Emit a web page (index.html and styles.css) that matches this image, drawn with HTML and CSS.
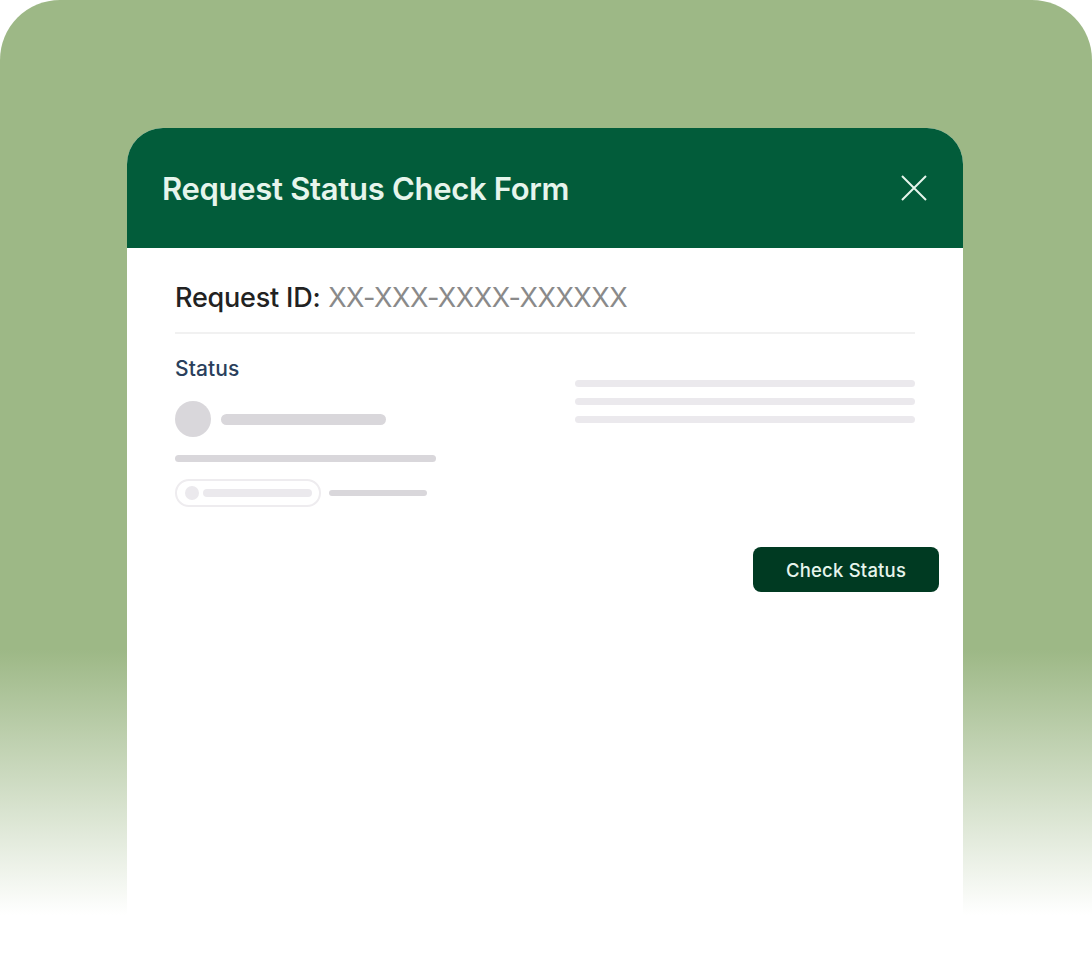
FILE: index.html
```html
<!DOCTYPE html>
<html>
<head>
<meta charset="utf-8">
<link rel="stylesheet" href="styles.css">
</head>
<body>
<div class="stage">
  <div class="card">
    <div class="card-head">
      <h1 class="title">Request Status Check Form</h1>
      <svg class="close" width="26" height="26" viewBox="0 0 26 26"><path d="M1 1L25 25M25 1L1 25" stroke="#e6f5ec" stroke-width="2" fill="none"/></svg>
    </div>
    <div class="card-body">
      <div class="req"><span class="req-label">Request ID:</span> <span class="req-val">XX-XXX-XXXX-XXXXXX</span></div>
      <div class="divider"></div>
      <div class="status-grid">
        <div class="status-left">
          <div class="status-label">Status</div>
          <div class="avatar-row">
            <div class="avatar"></div>
            <div class="bar bar-name"></div>
          </div>
          <div class="bar bar-long"></div>
          <div class="pill-row">
            <div class="pill"><span class="pill-dot"></span><span class="pill-bar"></span></div>
            <div class="bar bar-short"></div>
          </div>
        </div>
        <div class="status-right">
          <div class="line"></div>
          <div class="line"></div>
          <div class="line"></div>
        </div>
      </div>
    </div>
    <div class="card-foot">
      <button class="btn">Check Status</button>
    </div>
  </div>
</div>
</body>
</html>
```
FILE: styles.css
```css
html, body { margin: 0; padding: 0; background: #fff; }
body { font-family: Inter, "Open Sans", sans-serif; }
.stage {
  width: 1092px;
  height: 964px;
  border-radius: 60px 60px 0 0;
  background: linear-gradient(to bottom, #9db886 0, #9db886 650px, #ffffff 915px);
  padding-top: 128px;
  box-sizing: border-box;
  overflow: hidden;
}
.card {
  margin-left: 127px;
  width: 836px;
  height: 836px;
  background: #fff;
  border-radius: 36px 36px 0 0;
  overflow: hidden;
}
.card-head {
  height: 120px;
  background: #025c3a;
  display: flex;
  align-items: center;
  justify-content: space-between;
  padding: 0 36px 0 35px;
}
.title {
  margin: 0;
  font-size: 31px;
  font-weight: 600;
  color: #e6f5ec;
  letter-spacing: -0.3px;
}
.close { display: block; }
.card-body { padding: 30px 48px 0 48px; }
.req { font-size: 27px; line-height: 40px; }
.req-label { color: #222; font-weight: 500; letter-spacing: -0.2px; }
.req-val { color: #8a8a8a; font-weight: 400; letter-spacing: -0.5px; }
.divider { height: 2px; background: #f1f1f1; margin-top: 14px; }
.status-grid { display: flex; justify-content: space-between; margin-top: 21px; }
.status-left { width: 261px; }
.status-label { font-size: 21px; line-height: 28px; font-weight: 500; color: #2a3f5c; letter-spacing: 0.1px; }
.avatar-row { display: flex; align-items: center; gap: 10px; margin-top: 18px; }
.avatar { width: 36px; height: 36px; border-radius: 50%; background: #d9d7db; }
.bar { background: #d9d7db; border-radius: 6px; }
.bar-name { width: 165px; height: 11px; }
.bar-long { width: 261px; height: 7px; margin-top: 18px; }
.pill-row { display: flex; align-items: center; gap: 8px; margin-top: 17px; }
.pill {
  box-sizing: border-box;
  width: 146px; height: 28px;
  border: 2px solid #eeecef;
  border-radius: 14px;
  display: flex; align-items: center; gap: 4px;
  padding-left: 8px;
}
.pill-dot { width: 14px; height: 14px; border-radius: 50%; background: #ebe9ed; }
.pill-bar { width: 109px; height: 8px; border-radius: 4px; background: #ebe9ed; }
.bar-short { width: 98px; height: 6px; }
.status-right { width: 340px; margin-top: 25px; display: flex; flex-direction: column; gap: 11px; }
.line { height: 7px; border-radius: 4px; background: #ebe9ed; }
.card-foot { display: flex; justify-content: flex-end; padding-right: 24px; margin-top: 40px; }
.btn {
  width: 186px; height: 45px;
  background: #003a22;
  color: #e6f5ec;
  border: none;
  border-radius: 8px;
  font-family: Inter, "Open Sans", sans-serif;
  font-size: 18.5px;
  font-weight: 500;
  letter-spacing: 0.2px;
}
```
